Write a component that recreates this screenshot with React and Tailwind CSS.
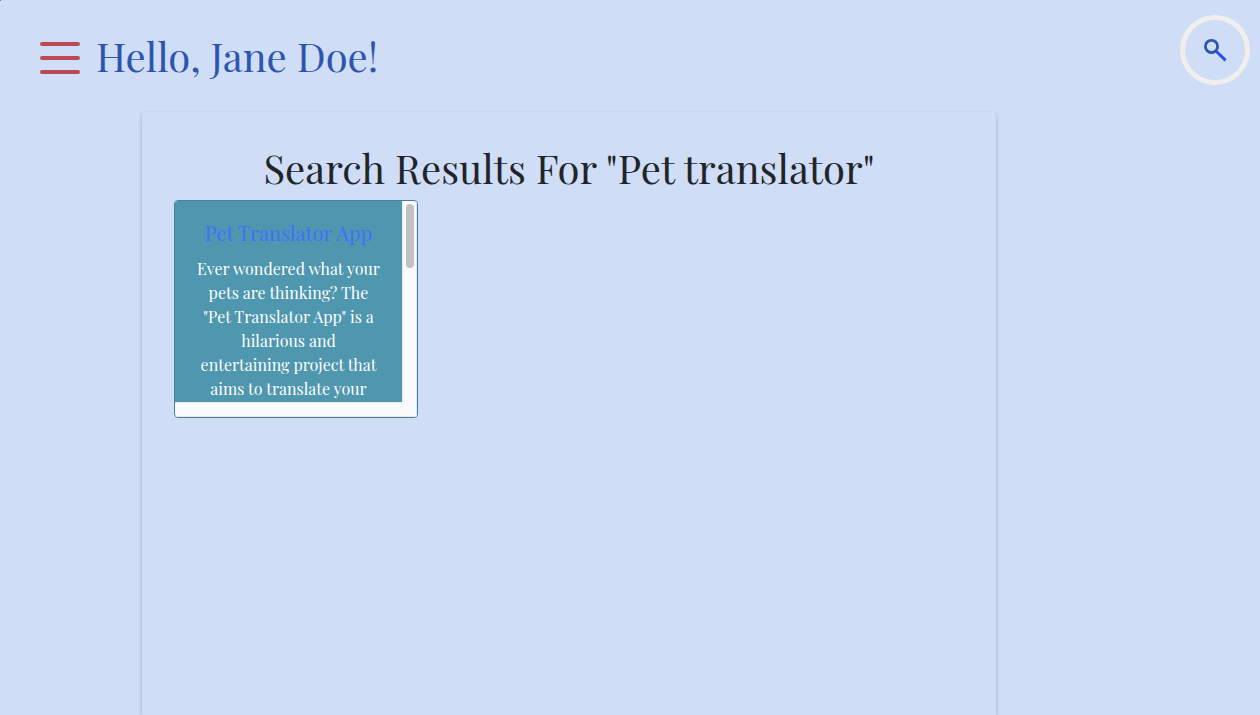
export default function App() {
  return (
    <div className="relative flex h-screen flex-col overflow-hidden bg-[#cfddf6] font-['Playfair_Display','Liberation_Serif',serif] text-[#212529]">
      <span className="absolute left-0 top-0 size-px bg-[#6b7280]" />
      <header className="flex items-start justify-between pl-10 pr-[10px] pt-[15px]">
        <div className="flex items-center gap-4 pt-[17px]">
          <button type="button" aria-label="Menu" className="flex w-10 flex-col gap-[10px] pt-1">
            <span className="h-1 w-full rounded-full bg-[#bb4a55]" />
            <span className="h-1 w-full rounded-full bg-[#bb4a55]" />
            <span className="h-1 w-full rounded-full bg-[#bb4a55]" />
          </button>
          <h1 className="text-[40px] leading-[48px] text-[#2d55ad]">Hello, Jane Doe!</h1>
        </div>
        <button type="button" aria-label="Search" className="flex size-[70px] items-center justify-center rounded-full border-[5px] border-[#f0efee]">
          <svg viewBox="0 0 24 24" className="size-6" fill="none">
            <path d="M13.2 13.2 22.6 22.4" stroke="#2450ec" strokeWidth="3" />
            <circle cx="8.5" cy="8.4" r="6.1" stroke="#2d55ad" strokeWidth="2.8" />
          </svg>
        </button>
      </header>
      <main className="ml-[142px] mr-[264px] mt-[27px] flex-1 rounded-t p-8 shadow-[0_2px_4px_rgba(0,0,0,0.2)]">
        <h2 className="mb-2 text-center text-[40px] leading-[48px]">Search Results For "Pet translator"</h2>
        <article className="grid h-[218px] w-[244px] grid-cols-[1fr_15px] grid-rows-[1fr_15px] overflow-hidden rounded border border-[#3f8399] bg-[#fafafa]">
          <div className="min-h-0 overflow-hidden bg-[#4f96af] px-5 pt-5 text-center text-white">
            <h3 className="mb-3 text-[20px] leading-6">
              <a href="#pet-translator-app" className="text-[#3c71ff]">Pet Translator App</a>
            </h3>
            <p className="text-[16px] leading-6">
              Ever wondered what your pets are thinking? The "Pet Translator App" is a hilarious and entertaining project that aims to translate your
            </p>
          </div>
          <div className="border-x border-[#e8e8e8] px-[3px] pt-[3px]">
            <div className="h-16 w-2 rounded-full bg-[#c1c1c1]" />
          </div>
          <div className="border-y border-[#e8e8e8]" />
          <div className="border-b border-r border-[#e8e8e8]" />
        </article>
      </main>
    </div>
  );
}
